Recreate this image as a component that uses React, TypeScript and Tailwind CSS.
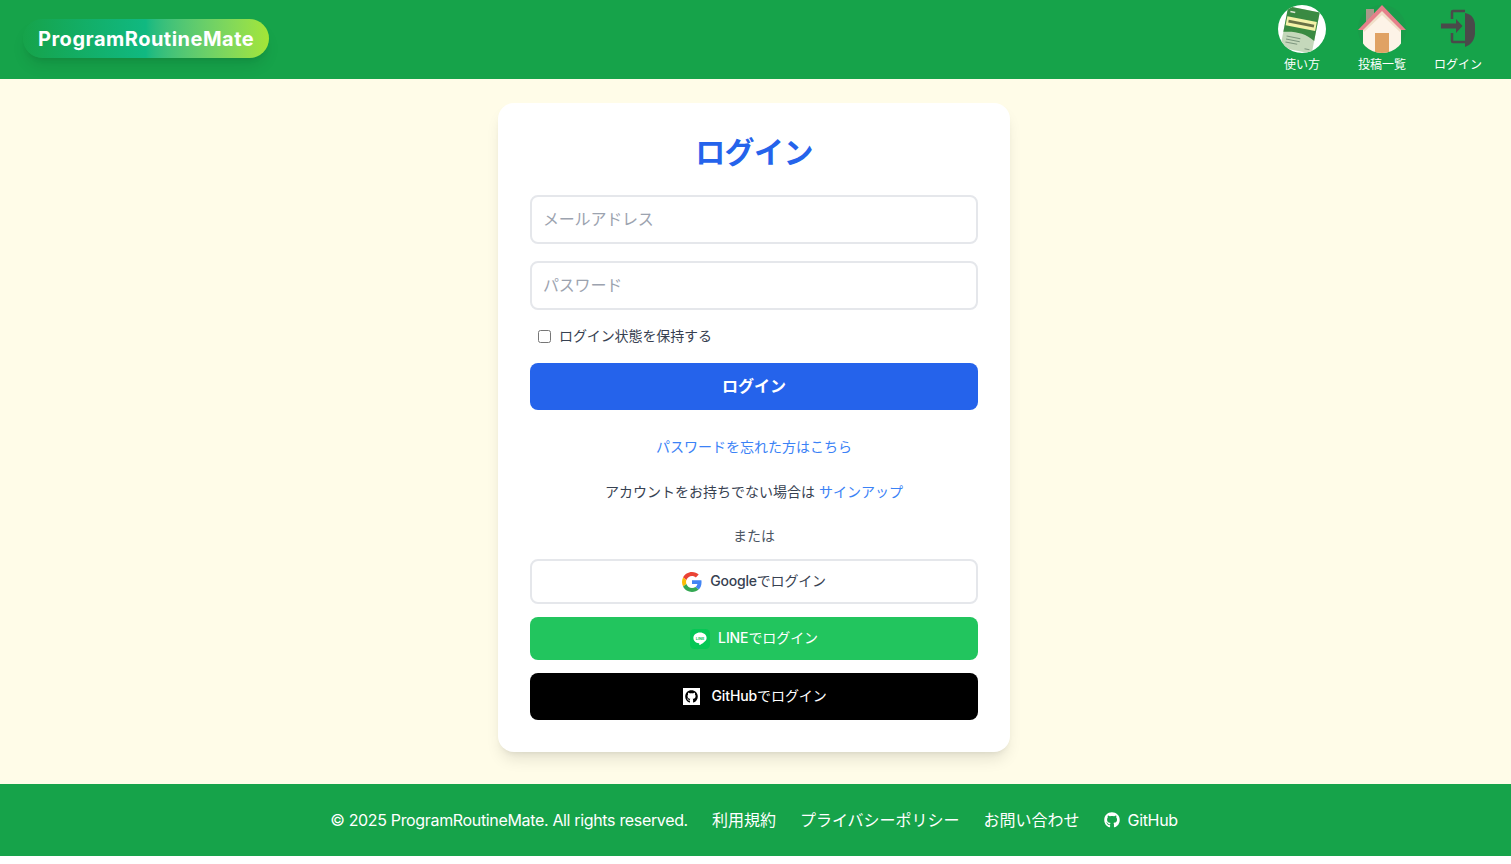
import React from 'react';
import { FaGithub } from 'react-icons/fa';

const BookIcon = () => (
  <svg width="48" height="48" viewBox="0 0 48 48">
    <defs>
      <clipPath id="bookClip">
        <circle cx="24" cy="24" r="24" />
      </clipPath>
    </defs>
    <circle cx="24" cy="24" r="24" fill="#ffffff" />
    <g clipPath="url(#bookClip)">
      <g transform="rotate(11 22 25)">
        <rect x="6" y="4" width="32" height="42" fill="#c5d8bb" />
        <path d="M6 4h32v29c-10-6-21-6-32-3z" fill="#3a8a42" />
        <rect x="7" y="14" width="30" height="9" fill="#f5f2a8" />
        <rect x="9" y="17" width="26" height="3" fill="#6a7246" />
        <rect x="9" y="8" width="5" height="1.500" fill="#dfe8d6" />
        <g fill="#7d967e">
          <rect x="10" y="33" width="14" height="1" />
          <rect x="10" y="36" width="14" height="1" />
          <rect x="10" y="39" width="12" height="1" />
          <rect x="30" y="42" width="5" height="1" />
        </g>
      </g>
    </g>
  </svg>
);

const HouseIcon = () => (
  <svg width="48" height="48" viewBox="0 0 48 48">
    <defs>
      <clipPath id="houseClip">
        <circle cx="24" cy="24" r="24" />
      </clipPath>
    </defs>
    <circle cx="24" cy="24" r="24" fill="#1a9c4a" />
    <rect x="8" y="4" width="8" height="14" fill="#a8998a" />
    <g clipPath="url(#houseClip)">
      <path d="M24 5 5 23v25h38V23z" fill="#fdf3e7" />
      <path d="M24 5 5 24l1 3L24 10l18 17 1-3z" fill="#f0dfc8" />
      <rect x="17" y="28" width="14" height="20" fill="#e0a264" />
    </g>
    <path d="M24 0 0 25h5L24 6l19 19h5z" fill="#e5808a" />
  </svg>
);

const DoorIcon = () => (
  <svg width="48" height="48" viewBox="0 0 48 48">
    <path d="M18 14V7a1 1 0 0 1 1-1h12M18 28v8a1 1 0 0 0 1 1h13" fill="none" stroke="#4a4a4a" strokeWidth="2.500" />
    <path d="M31 8c4 1 6 2 8 5 1 2 2 4 2 7v8c0 5-3 10-6 12l-4 2z" fill="#4a4a4a" />
    <path d="M7 18.500h15V14l6.500 7-6.500 7v-4.500H7z" fill="#4a4a4a" />
  </svg>
);

const GoogleIcon = () => (
  <svg width="20" height="20" viewBox="0 0 48 48">
    <path fill="#EA4335" d="M24 9.500c3.500 0 6.700 1.200 9.200 3.600l6.900-6.900C35.900 2.400 30.500 0 24 0 14.600 0 6.500 5.400 2.600 13.200l8 6.200C12.500 13.600 17.800 9.500 24 9.500z" />
    <path fill="#4285F4" d="M46.900 24.500c0-1.600-.1-3.100-.4-4.500H24v9h12.900c-.6 3-2.200 5.500-4.700 7.200l7.700 6c4.500-4.200 7-10.300 7-17.700z" />
    <path fill="#FBBC05" d="M10.500 28.600c-.5-1.400-.8-3-.8-4.600s.3-3.200.8-4.600l-8-6.200C.9 16.500 0 20.100 0 24s.9 7.500 2.600 10.800l7.900-6.200z" />
    <path fill="#34A853" d="M24 48c6.500 0 11.900-2.100 15.900-5.800l-7.700-6c-2.100 1.400-4.900 2.300-8.200 2.300-6.200 0-11.500-4.200-13.400-9.800l-8 6.200C6.500 42.600 14.600 48 24 48z" />
  </svg>
);

const LineIcon = () => (
  <svg width="20" height="20" viewBox="0 0 20 20">
    <rect width="20" height="20" rx="4.500" fill="#06c755" />
    <path d="M10 3.600c-3.700 0-6.600 2.400-6.600 5.400 0 2.700 2.300 4.900 5.500 5.300.6.200.5.600.4 1.300-.1.500.2.600.7.400 1.800-1 4-2.400 5.300-3.900.8-.9 1.300-1.900 1.300-3.100 0-3-2.900-5.400-6.600-5.400z" fill="#ffffff" />
    <text x="10" y="10.500" textAnchor="middle" fontSize="3.800" fontWeight="700" fill="#06c755">LINE</text>
  </svg>
);

const NavItem = ({ icon, label, className }: { icon: React.ReactNode; label: string; className?: string }) => (
  <a className={`flex w-12 flex-col items-center ${className ?? ''}`}>
    {icon}
    <span className="mt-1 whitespace-nowrap text-xs leading-4 text-white">{label}</span>
  </a>
);

const inputClass =
  'h-[49px] w-full rounded-lg border-2 border-[#e5e7eb] bg-white pb-[2px] pl-[11px] pr-3 text-base tracking-[-0.2px] text-gray-800 outline-none placeholder:text-[#9ca3af]';

export default function App() {
  return (
    <div className="flex flex-col bg-white font-['Inter','Noto_Sans_CJK_JP',sans-serif]">
      <header className="flex h-[79px] items-start justify-between bg-[#16a34a]">
        <a className="ml-[23px] mt-[19px] flex h-[39px] items-center rounded-full bg-gradient-to-r from-[#16a34a] via-[#10b981] to-[#a3e635] px-[15px] text-xl font-bold tracking-wide text-white shadow-lg">
          ProgramRoutineMate
        </a>
        <nav className="mr-[29px] mt-[5px] flex">
          <NavItem icon={<BookIcon />} label="使い方" className="mr-8" />
          <NavItem icon={<HouseIcon />} label="投稿一覧" className="mr-7" />
          <NavItem icon={<DoorIcon />} label="ログイン" />
        </nav>
      </header>

      <main className="flex justify-center bg-[#fffce8] pb-8 pr-[3px] pt-6">
        <div className="w-[512px] rounded-2xl bg-white p-8 shadow-lg">
          <h1 className="mb-[26px] text-center text-3xl leading-[34px] font-bold tracking-[-0.6px] text-[#2563eb]">ログイン</h1>
          <input className={inputClass} placeholder="メールアドレス" />
          <input className={`${inputClass} mt-[17px]`} placeholder="パスワード" />
          <label className="mt-4 flex h-5 items-center gap-2 pl-2 text-sm tracking-[-0.1px] text-[#374151]">
            <input type="checkbox" className="h-[13px] w-[13px]" />
            ログイン状態を保持する
          </label>
          <button className="mt-[17px] h-[47px] w-full rounded-lg bg-[#2563eb] pb-[2px] font-bold text-white">ログイン</button>
          <p className="mt-[27px] text-center text-sm leading-5 text-[#3b82f6]">パスワードを忘れた方はこちら</p>
          <p className="mt-[25px] text-center text-sm leading-5 text-[#374151]">
            アカウントをお持ちでない場合は <span className="text-[#3b82f6]">サインアップ</span>
          </p>
          <p className="mt-6 text-center text-sm leading-5 text-[#4b5563]">または</p>
          <button className="mt-[13px] flex h-[45px] w-full items-center justify-center gap-2 rounded-lg border-2 border-[#e5e7eb] bg-white text-sm text-[#374151]">
            <GoogleIcon />
            <span className="pb-[2px] tracking-[-0.2px]"><span className="font-medium">Google</span>でログイン</span>
          </button>
          <button className="mt-[13px] flex h-[43px] w-full items-center justify-center gap-2 rounded-lg bg-[#22c55e] text-sm text-white">
            <LineIcon />
            <span className="pb-[2px] tracking-[-0.1px]"><span className="font-medium">LINE</span>でログイン</span>
          </button>
          <button className="mt-[13px] flex h-[47px] w-full items-center justify-center gap-[11px] rounded-lg bg-black pl-[2px] text-sm text-white">
            <span className="flex h-[17px] w-[17px] items-center justify-center bg-white">
              <FaGithub className="h-[13px] w-[13px] text-black" />
            </span>
            <span className="pb-[2px] tracking-[-0.1px]"><span className="font-medium">GitHub</span>でログイン</span>
          </button>
        </div>
      </main>

      <footer className="flex h-[72px] items-center justify-center gap-6 bg-[#16a34a] pr-[3px] text-base text-white">
        <span className="tracking-[-0.34px]">© 2025 ProgramRoutineMate. All rights reserved.</span>
        <a>利用規約</a>
        <a>プライバシーポリシー</a>
        <a>お問い合わせ</a>
        <a className="flex items-center gap-2">
          <FaGithub className="h-4 w-4" />
          <span className="tracking-[-0.34px]">GitHub</span>
        </a>
      </footer>
      <div className="h-2 bg-white" />
    </div>
  );
}
